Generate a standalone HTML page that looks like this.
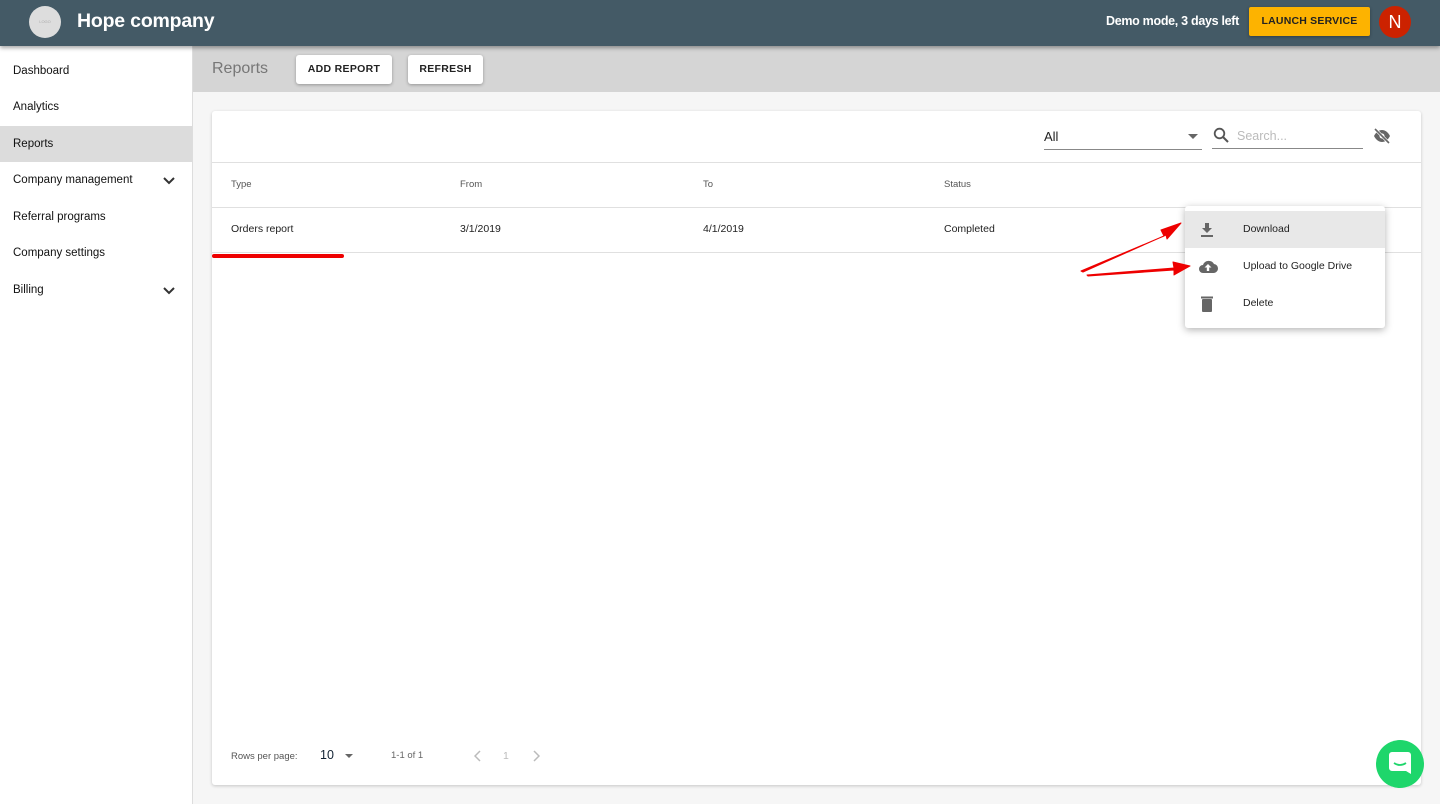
<!DOCTYPE html>
<html><head><style>
*{box-sizing:border-box;margin:0;padding:0}
body{width:1440px;height:804px;overflow:hidden;font-family:"Liberation Sans",sans-serif;background:#f6f6f6;position:relative;font-size:12px;color:#222}
.hdr{position:absolute;left:0;top:0;width:1440px;height:46px;background:#445a66;box-shadow:0 2px 4px rgba(0,0,0,.35);z-index:5}
.logo{position:absolute;left:29px;top:6px;width:32px;height:32px;border-radius:50%;background:#ddd;color:#aaa;font-size:4px;text-align:center;line-height:32px}
.title{position:absolute;left:77px;top:10px;color:#fff;font-size:19.5px;font-weight:bold;letter-spacing:-.2px}
.demo{position:absolute;right:201px;top:14px;color:#fff;font-size:12.5px;font-weight:bold;letter-spacing:-.3px;white-space:nowrap}
.launch{position:absolute;left:1249px;top:7px;width:121px;height:29px;background:#fdb300;border-radius:2px;font-size:10.5px;font-weight:bold;text-align:center;line-height:29px;color:#222;letter-spacing:.2px;box-shadow:0 1px 3px rgba(0,0,0,.3)}
.av{position:absolute;left:1379px;top:6px;width:32px;height:32px;border-radius:50%;background:#cc2200;color:#fff;font-size:18px;text-align:center;line-height:32px}
.side{position:absolute;left:0;top:46px;width:193px;height:758px;background:#fff;border-right:1px solid #ddd}
.si{position:absolute;left:0;width:192px;height:36px;line-height:36px;padding-left:13px;font-size:11.5px;color:#111}
.si svg{position:absolute;right:17px;top:15px}
.band{position:absolute;left:193px;top:46px;width:1247px;height:46px;background:#d5d5d5}
.rep{position:absolute;left:212px;top:60px;font-size:16px;color:#777}
.btn{position:absolute;top:55px;height:29px;background:#fff;border-radius:3px;box-shadow:0 1px 3px rgba(0,0,0,.3);font-size:10.5px;font-weight:bold;line-height:29px;text-align:center;letter-spacing:.3px}
.card{position:absolute;left:212px;top:111px;width:1209px;height:674px;background:#fff;border-radius:3px;box-shadow:0 1px 3px rgba(0,0,0,.2)}
.t{position:absolute;font-size:10.5px}
.line{position:absolute;left:0;width:1209px;height:1px;background:#e0e0e0}
.menu{position:absolute;left:1185px;top:206px;width:200px;height:122px;background:#fff;border-radius:3px;box-shadow:0 2px 8px rgba(0,0,0,.3);z-index:3}
.mi{position:absolute;left:0;width:200px;height:37px;line-height:37px;padding-left:58px;font-size:10.5px;color:#222}
.mi svg{position:absolute;left:12px;top:10px}
</style></head><body>
<div class="hdr"><div class="logo">LOGO</div><div class="title">Hope company</div><div class="demo">Demo mode, 3 days left</div><div class="launch">LAUNCH SERVICE</div><div class="av">N</div></div>
<div class="side">
<div class="si" style="top:7px">Dashboard</div>
<div class="si" style="top:43px">Analytics</div>
<div class="si" style="top:80px;background:#dcdcdc">Reports</div>
<div class="si" style="top:116px">Company management<svg width="12" height="8" viewBox="0 0 12 8"><path d="M1 1l5 5 5-5" stroke="#333" stroke-width="2" fill="none"/></svg></div>
<div class="si" style="top:153px">Referral programs</div>
<div class="si" style="top:189px">Company settings</div>
<div class="si" style="top:226px">Billing<svg width="12" height="8" viewBox="0 0 12 8"><path d="M1 1l5 5 5-5" stroke="#333" stroke-width="2" fill="none"/></svg></div>
</div>
<div class="band"></div>
<div class="rep">Reports</div>
<div class="btn" style="left:296px;width:96px">ADD REPORT</div>
<div class="btn" style="left:408px;width:75px">REFRESH</div>
<div class="card">
<div class="t" style="left:832px;top:18px;font-size:13px">All</div>
<div style="position:absolute;left:832px;top:38px;width:158px;height:1px;background:#888"></div>
<div style="position:absolute;left:976px;top:23px;border:5px solid transparent;border-top-color:#666;border-bottom:0"></div>
<svg style="position:absolute;left:1001px;top:16px" width="16" height="16" viewBox="0 0 16 16"><circle cx="6.5" cy="6.5" r="4.8" stroke="#555" stroke-width="1.8" fill="none"/><path d="M10 10l5 5" stroke="#555" stroke-width="2"/></svg>
<div class="t" style="left:1025px;top:18px;font-size:12.5px;color:#bbb">Search...</div>
<div style="position:absolute;left:1000px;top:37px;width:151px;height:1px;background:#888"></div>
<svg style="position:absolute;left:1161px;top:17px" width="18" height="16" viewBox="0 0 18 16"><path d="M1 8c2-4 5-6 8-6s6 2 8 6c-2 4-5 6-8 6S3 12 1 8z" fill="#666"/><circle cx="9" cy="8" r="2.5" fill="#fff"/><path d="M2 1l14 14" stroke="#fff" stroke-width="3"/><path d="M2 1l14 14" stroke="#666" stroke-width="1.6"/></svg>
<div class="line" style="top:51px"></div>
<div class="t" style="left:19px;top:68px;font-size:9.5px;color:#555">Type</div>
<div class="t" style="left:248px;top:68px;font-size:9.5px;color:#555">From</div>
<div class="t" style="left:491px;top:68px;font-size:9.5px;color:#555">To</div>
<div class="t" style="left:732px;top:68px;font-size:9.5px;color:#555">Status</div>
<div class="line" style="top:96px"></div>
<div class="t" style="left:19px;top:112px">Orders report</div>
<div class="t" style="left:248px;top:112px">3/1/2019</div>
<div class="t" style="left:491px;top:112px">4/1/2019</div>
<div class="t" style="left:732px;top:112px">Completed</div>
<div class="line" style="top:141px"></div>
<div style="position:absolute;left:0;top:143px;width:132px;height:4px;background:#e00;border-radius:2px"></div>
<div class="t" style="left:19px;top:640px;font-size:9.5px;color:#555">Rows per page:</div>
<div class="t" style="left:108px;top:637px;font-size:12.5px;color:#123">10</div>
<div style="position:absolute;left:133px;top:643px;border:4px solid transparent;border-top-color:#666;border-bottom:0"></div>
<div class="t" style="left:179px;top:639px;font-size:9.5px;color:#666">1-1 of 1</div>
<svg style="position:absolute;left:262px;top:639px" width="8" height="12"><path d="M6 1L1 6l5 5" stroke="#bbb" stroke-width="1.5" fill="none"/></svg>
<div class="t" style="left:291px;top:639px;font-size:10.5px;color:#bbb">1</div>
<svg style="position:absolute;left:320px;top:639px" width="8" height="12"><path d="M2 1l5 5-5 5" stroke="#bbb" stroke-width="1.5" fill="none"/></svg>
</div>
<div class="menu">
<div class="mi" style="top:5px;background:#e8e8e8">Download<svg width="20" height="18" viewBox="0 0 20 18"><path d="M8 2h4v5h3l-5 5-5-5h3z" fill="#666"/><rect x="4" y="14" width="12" height="2" fill="#666"/></svg></div>
<div class="mi" style="top:42px">Upload to Google Drive<svg width="22" height="18" viewBox="0 0 22 18"><path d="M6 15a4 4 0 010-8 6 6 0 0111-1 4.5 4.5 0 01-1 9z" fill="#666"/><path d="M11 6l-3.5 3.5h2.3V13h2.4V9.5h2.3z" fill="#fff"/></svg></div>
<div class="mi" style="top:79px">Delete<svg width="20" height="18" viewBox="0 0 20 18"><rect x="5" y="4" width="10" height="13" rx="1" fill="#666"/><rect x="4" y="1.5" width="12" height="2" fill="#666"/></svg></div>
</div>
<svg style="position:absolute;left:0;top:0;z-index:4" width="1440" height="804"><path d="M1081 271L1164 236l-3-6 20-7-14 16-1-4L1083 272z" fill="#e00" stroke="#e00" stroke-width="1" stroke-linejoin="round"/><path d="M1087 275L1174 268l-1-6 17 4-16 9v-5L1088 276z" fill="#e00" stroke="#e00" stroke-width="1" stroke-linejoin="round"/></svg>
<div style="position:absolute;left:1376px;top:740px;width:48px;height:48px;border-radius:50%;background:#1ed66b;z-index:6"><svg style="position:absolute;left:13px;top:12px" width="22" height="24" viewBox="0 0 22 24"><path d="M3 0h16a3 3 0 013 3v19l-5-3H3a3 3 0 01-3-3V3a3 3 0 013-3z" fill="#fff"/><path d="M5 11q6 4 12 0" stroke="#1ed66b" stroke-width="1.8" fill="none"/></svg></div>
</body></html>
